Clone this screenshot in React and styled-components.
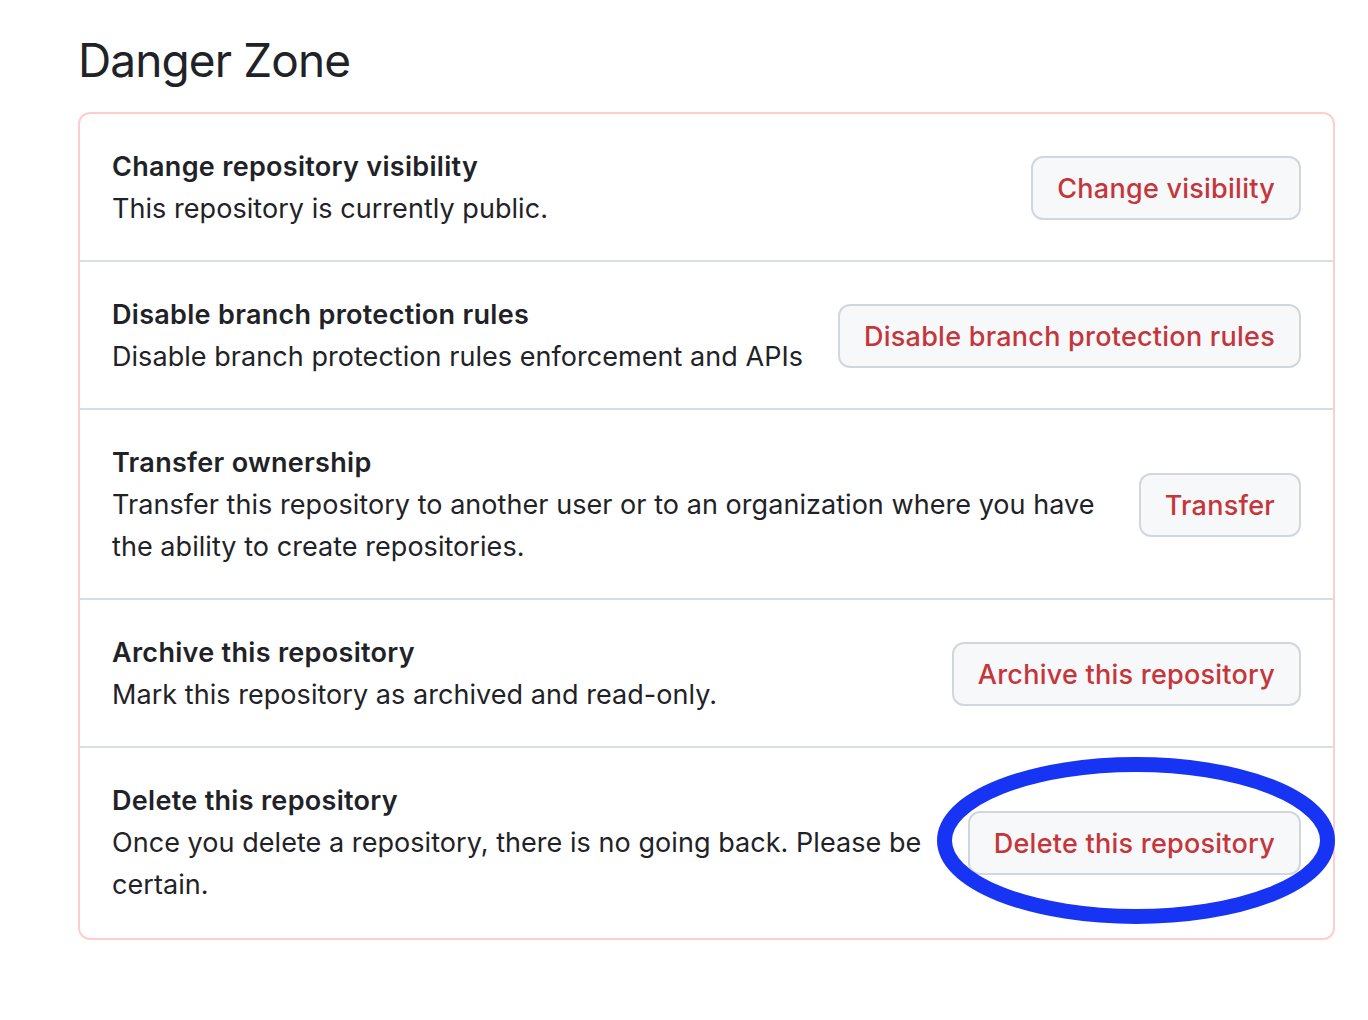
import React from "react";
import styled, { createGlobalStyle } from "styled-components";

const GlobalStyle = createGlobalStyle`
  body {
    margin: 0;
    background: #ffffff;
    font-family: Inter, "Noto Sans", "Liberation Sans", sans-serif;
    color: #1f2328;
  }
`;

const Page = styled.div`
  padding: 29px 33px 0 78px;
`;

const Heading = styled.h2`
  margin: 0 0 21px 0;
  font-size: 46px;
  font-weight: 400;
  line-height: 62px;
  letter-spacing: -0.9px;
`;

const DangerBox = styled.div`
  border: 2px solid #ffcecb;
  border-radius: 12px;
  background: #ffffff;
`;

const Row = styled.div`
  display: flex;
  align-items: center;
  gap: 28px;
  padding: ${(p) => (p.$last ? "32px 32px 32px" : "32px 32px 30px")};
  border-top: ${(p) => (p.$first ? "none" : "2px solid #d8dee4")};
`;

const Info = styled.div`
  flex: 1;
  min-width: 0;
  font-size: 27px;
  line-height: 42px;
`;

const Title = styled.div`
  font-weight: 600;
  letter-spacing: 0.3px;
`;

const Desc = styled.div`
  font-weight: 400;
  letter-spacing: 0.05px;
`;

const ButtonWrap = styled.span`
  position: relative;
  flex-shrink: 0;
  display: inline-flex;
`;

const DangerButton = styled.button`
  height: 64px;
  padding: 0 24px;
  font-family: inherit;
  font-size: 27px;
  font-weight: 500;
  letter-spacing: 0.25px;
  color: #c4363a;
  background: #f6f8fa;
  border: 2px solid #d0d7de;
  border-radius: 12px;
  white-space: nowrap;
  cursor: pointer;
`;

const Circle = styled.svg`
  position: absolute;
  right: -34px;
  top: -54px;
  width: 398px;
  height: 167px;
  pointer-events: none;
  overflow: visible;
`;

const rows = [
  {
    title: "Change repository visibility",
    desc: "This repository is currently public.",
    action: "Change visibility",
  },
  {
    title: "Disable branch protection rules",
    desc: "Disable branch protection rules enforcement and APIs",
    action: "Disable branch protection rules",
  },
  {
    title: "Transfer ownership",
    desc: "Transfer this repository to another user or to an organization where you have the ability to create repositories.",
    action: "Transfer",
  },
  {
    title: "Archive this repository",
    desc: "Mark this repository as archived and read-only.",
    action: "Archive this repository",
  },
  {
    title: "Delete this repository",
    desc: "Once you delete a repository, there is no going back. Please be certain.",
    action: "Delete this repository",
    marked: true,
  },
];

const App = () => {
  return (
    <>
      <GlobalStyle />
      <Page>
        <Heading>Danger Zone</Heading>
        <DangerBox>
          {rows.map((row, i) => (
            <Row
              key={row.title}
              $first={i === 0}
              $last={i === rows.length - 1}
            >
              <Info>
                <Title>{row.title}</Title>
                <Desc>{row.desc}</Desc>
              </Info>
              <ButtonWrap>
                <DangerButton type="button">{row.action}</DangerButton>
                {row.marked ? (
                  <Circle viewBox="0 0 398 167">
                    <ellipse
                      cx="199"
                      cy="83.5"
                      rx="191.5"
                      ry="76"
                      fill="none"
                      stroke="#1734f5"
                      strokeWidth="15"
                    />
                  </Circle>
                ) : null}
              </ButtonWrap>
            </Row>
          ))}
        </DangerBox>
      </Page>
    </>
  );
};

export default App;
